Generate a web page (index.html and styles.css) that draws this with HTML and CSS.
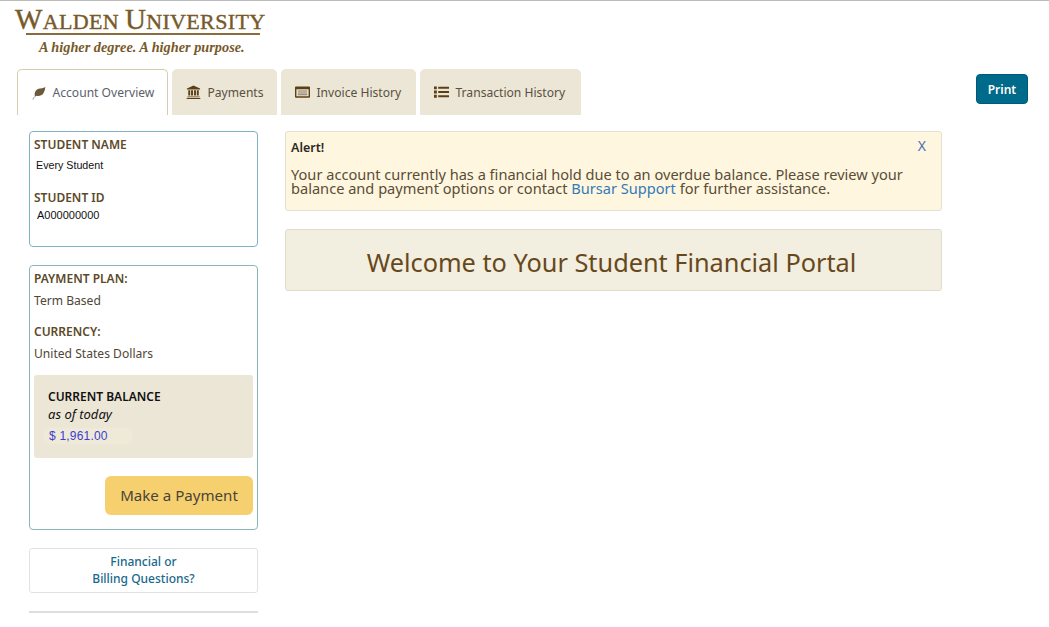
FILE: index.html
```html
<!DOCTYPE html>
<html lang="en">
<head>
<meta charset="utf-8">
<title>Student Financial Portal</title>
<link rel="stylesheet" href="styles.css">
</head>
<body>
<header class="logo">
  <div class="logo-name"><span class="cap">W</span>ALDEN <span class="cap">U</span>NIVERSITY</div>
  <div class="logo-rule"></div>
  <div class="logo-tag">A higher degree. A higher purpose.</div>
</header>
<nav class="nav-row">
  <ul class="tabs">
    <li class="tab tab-active">
      <svg class="ico" viewBox="0 0 16 16"><path fill="#6b5a3a" d="M1 15c1-1.300 2-2.400 3-3.200C2.800 8.500 4.500 4.500 8 3.200c2.700-1 5.500-.6 7.800-2.200-.4 3.500-1.500 8-4.800 9.600-2.300 1.100-4 .8-5.500.5-1.300.8-2.800 2.300-3.700 4.200z"/></svg>
      <span>Account Overview</span>
    </li>
    <li class="tab tab-payments">
      <svg class="ico" viewBox="0 0 16 16"><path fill="#5c3f14" d="M8 0.500 15.500 4v1H.5V4zM2 6h2.200v6H2zM5.200 6h2.200v6H5.200zM8.600 6h2.200v6H8.600zM11.800 6H14v6h-2.200zM1 13h14v1H1zM.2 14.800h15.600V16H.2z"/></svg>
      <span>Payments</span>
    </li>
    <li class="tab tab-invoice">
      <svg class="ico" viewBox="0 0 16 14"><path fill="#5c3f14" fill-rule="evenodd" d="M1 1h14a1 1 0 0 1 1 1v10a1 1 0 0 1-1 1H1a1 1 0 0 1-1-1V2a1 1 0 0 1 1-1zm.5 3v7.500h13V4z"/><path fill="#8a7a60" d="M3 5.500h10v1H3zM3 7.500h10v1H3zM3 9.500h10v1H3z"/></svg>
      <span>Invoice History</span>
    </li>
    <li class="tab tab-transaction">
      <svg class="ico" viewBox="0 0 16 14"><path fill="#5c3f14" d="M0 1h3v3H0zM0 5.500h3v3H0zM0 10h3v3H0zM4.500 1.500H16v2H4.500zM4.500 6H16v2H4.500zM4.500 10.500H16v2H4.500z"/></svg>
      <span>Transaction History</span>
    </li>
  </ul>
  <button class="print" type="button">Print</button>
</nav>
<div class="layout">
  <aside class="sidebar">
    <section class="card card-student">
      <h3 class="label">STUDENT NAME</h3>
      <p class="student-value name-value">Every Student</p>
      <h3 class="label id-label">STUDENT ID</h3>
      <p class="student-value id-value">A000000000</p>
    </section>
    <section class="card card-plan">
      <h3 class="label">PAYMENT PLAN:</h3>
      <p class="plan-value">Term Based</p>
      <h3 class="label currency-label">CURRENCY:</h3>
      <p class="plan-value">United States Dollars</p>
      <div class="balance">
        <div class="balance-title">CURRENT BALANCE</div>
        <div class="balance-date">as of today</div>
        <div class="balance-amount"><span>$ 1,961.00</span></div>
      </div>
      <div class="pay-row"><button class="pay" type="button">Make a Payment</button></div>
    </section>
    <a class="questions" href="#">Financial or<br>Billing Questions?</a>
    <div class="rule"></div>
  </aside>
  <main class="main">
    <section class="alert">
      <div class="alert-head"><strong>Alert!</strong><span class="close">X</span></div>
      <p class="alert-text">Your account currently has a financial hold due to an overdue balance. Please review your balance and payment options or contact <a href="#">Bursar Support</a> for further assistance.</p>
    </section>
    <section class="welcome"><h1>Welcome to Your Student Financial Portal</h1></section>
  </main>
</div>
</body>
</html>
```
FILE: styles.css
```css
* { box-sizing: border-box; }
html, body { height: 100%; }
body {
  margin: 0;
  height: 627px;
  overflow: hidden;
  border-top: 1px solid #bbb;
  background: #fff;
  font-family: "Noto Sans", "Open Sans", sans-serif;
  color: #4a3d2a;
}
h1, h3, p { margin: 0; font-weight: normal; }

.logo { padding: 5px 0 0 15px; height: 68px; color: #78592a; font-family: "Liberation Serif", serif; }
.logo-name { font-size: 22px; line-height: 26px; height: 27px; white-space: nowrap; letter-spacing: .35px; -webkit-text-stroke: .4px #78592a; }
.cap { font-size: 29px; }
.logo-rule { width: 234px; height: 2px; margin: 0 0 0 11px; background: #8a6d3f; }
.logo-tag { font-size: 14.300px; font-style: italic; font-weight: bold; line-height: 18px; padding: 3px 0 0 24px; white-space: nowrap; }

.nav-row { display: flex; justify-content: space-between; padding: 0 21px 0 17px; height: 46px; }
.tabs { display: flex; gap: 4px; list-style: none; margin: 0; padding: 0; }
.tab {
  display: flex; align-items: center; gap: 6.500px;
  height: 46px; padding: 0 14px;
  background: #ebe6d6;
  border-radius: 5px 5px 0 0;
  font-size: 12.100px; color: #5a5040;
  white-space: nowrap;
}
.tab-active { width: 151px; background: #fff; border: 1px solid #d6ccae; border-bottom: 0; padding: 0 13px; color: #5b5f6b; }
.tab-payments { width: 105px; }
.tab-invoice { width: 135px; }
.tab-transaction { width: 161px; }
.ico { width: 15px; height: 14px; flex: none; }
.print {
  margin-top: 5px; width: 52px; height: 30px; padding: 0;
  background: #006a8a; border: 1px solid #00597a; border-radius: 4px;
  color: #fff; font: 600 12px "Noto Sans", sans-serif;
}

.layout { display: flex; align-items: flex-start; padding: 16px 0 0 29px; gap: 27px; }
.sidebar { width: 229px; flex: none; }
.main { width: 657px; flex: none; }

.card { border: 1px solid #7fb3c8; border-radius: 4px; padding: 4px 4px 0; background: #fff; }
.card-student { height: 116px; }
.card-plan { height: 265px; margin-top: 18px; border-color: #8fb3bd; }
.label { font-size: 12px; font-weight: 600; line-height: 18px; color: #5c4a2a; }
.student-value { font-family: "Liberation Sans", sans-serif; font-size: 10.700px; line-height: 14px; color: #111; padding-left: 2px; }
.name-value { margin-top: 4px; }
.id-label { margin-top: 17px; }
.id-value { margin-top: 1px; padding-left: 3px; font-size: 11px; }
.plan-value { font-size: 12.100px; line-height: 16px; margin-top: 5px; color: #4f4636; }
.currency-label { margin-top: 14px; }

.balance { margin-top: 13px; height: 83px; background: #ebe6d6; border-radius: 3px; padding: 13px 0 0 14px; color: #111; }
.balance-title { font-size: 12px; font-weight: 600; line-height: 18px; }
.balance-date { font-size: 13px; font-style: italic; line-height: 17px; }
.balance-amount { margin: 5px 0 0 -4px; font-family: "Liberation Sans", sans-serif; font-size: 12px; line-height: 16px; letter-spacing: .2px; color: #3c3fd0; }
.balance-amount span { display: inline-block; width: 88px; padding-left: 5px; background: #efe9d8; border-radius: 4px; }
.pay-row { display: flex; justify-content: flex-end; margin-top: 18px; }
.pay { width: 148px; height: 39px; padding: 0 0 2px; border: 0; border-radius: 6px; background: #f6d06f; color: #4a4438; font: 15.100px "Noto Sans", sans-serif; }

.questions {
  display: block; margin-top: 18px; height: 45px; padding-top: 4px;
  border: 1px solid #e2e2e2; border-radius: 3px;
  text-align: center; text-decoration: none;
  font-size: 12px; font-weight: 500; line-height: 17px; color: #17698a;
}
.rule { margin-top: 18px; height: 2px; background: #ddd; }

.alert { height: 80px; background: #fff6e0; border: 1px solid #e5e0d2; border-radius: 3px; padding: 7px 15px 0 5px; }
.alert-head { display: flex; justify-content: space-between; font-size: 12.500px; line-height: 17px; color: #2e2a24; }
.alert-head strong { font-weight: 600; }
.close { color: #4a6fb5; font-size: 14px; margin-top: -2px; }
.alert-text { margin-top: 11px; font-size: 14.600px; line-height: 14px; color: #5a4d36; }
.alert-text a { color: #337ab7; text-decoration: none; }
.welcome { margin-top: 18px; height: 62px; padding: 4px 4px 0 0; background: #f2eee0; border: 1px solid #e0dccf; border-radius: 3px; display: flex; align-items: center; justify-content: center; }
.welcome h1 { font-size: 25.300px; color: #67481b; line-height: 30px; }
```
